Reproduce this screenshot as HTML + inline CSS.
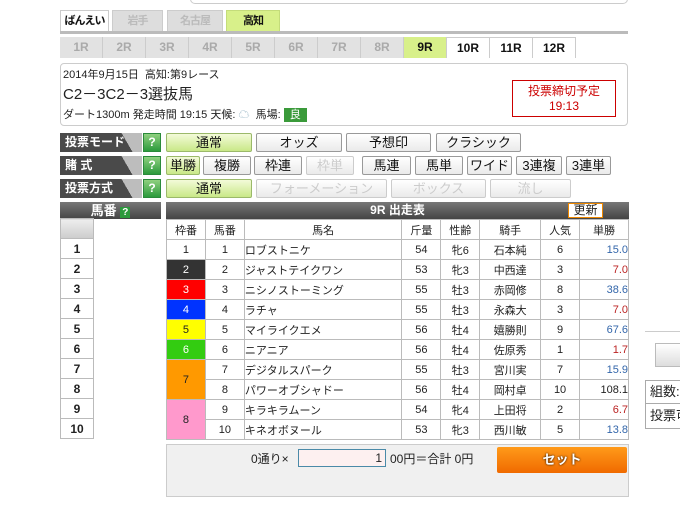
<!DOCTYPE html>
<html><head><meta charset="utf-8"><style>
*{margin:0;padding:0;box-sizing:border-box}
body{width:680px;height:510px;background:#fff;position:relative;overflow:hidden;font-family:"Liberation Sans","Noto Sans CJK JP",sans-serif;color:#222}
.a{position:absolute}
.tab{position:absolute;top:10px;height:21px;font-size:11px;text-align:center;line-height:20px;border:1px solid #ccc;border-bottom:none;font-weight:bold;color:#bbb;background:#ddd;white-space:nowrap;overflow:hidden;letter-spacing:-1px}
.rt{position:absolute;top:37px;width:43px;height:21px;font-size:12px;font-weight:bold;text-align:center;line-height:20px;border-right:1px solid #ccc;color:#aaa;background:#e2e2e2}
.lbl{position:absolute;left:60px;width:82px;height:19px;background:linear-gradient(60deg,#4a4a4a 0,#4a4a4a 78%,#bdbdbd 78%);color:#fff;font-size:12px;font-weight:bold;line-height:19px;padding-left:5px}
.q{position:absolute;left:143px;width:18px;height:19px;background:linear-gradient(#8fd07f,#2c9a3c);border:1px solid #2a8a3a;color:#fff;font-weight:bold;font-size:12px;text-align:center;line-height:17px}
.b{position:absolute;height:19px;border:1px solid #999;border-radius:2px;background:linear-gradient(#fff,#eaeaea);font-size:13px;text-align:center;line-height:17px;color:#111;white-space:nowrap;overflow:hidden}
.g{background:linear-gradient(#f3fbd9,#c9e888);border-color:#9bb96a}
.d{color:#ccc;border-color:#ccc}
table{border-collapse:collapse;font-size:11px}
td{border:1px solid #bbb;height:20px;text-align:center;padding:0}
</style></head><body>
<div class="a" style="left:190px;top:-6px;width:438px;height:10px;border:1px solid #ccc;border-radius:0 0 5px 5px"></div>
<div class="tab" style="left:60px;width:49px;background:#fff;color:#111">ばんえい</div>
<div class="tab" style="left:112px;width:51px">岩手</div>
<div class="tab" style="left:167px;width:56px">名古屋</div>
<div class="tab" style="left:226px;width:54px;background:#d8f08a;color:#111;border-color:#c4dc7a">高知</div>
<div class="a" style="left:60px;top:31px;width:568px;height:3px;background:#bbb"></div>
<div class="rt" style="left:60px">1R</div><div class="rt" style="left:103px">2R</div><div class="rt" style="left:146px">3R</div><div class="rt" style="left:189px">4R</div><div class="rt" style="left:232px">5R</div><div class="rt" style="left:275px">6R</div><div class="rt" style="left:318px">7R</div><div class="rt" style="left:361px">8R</div>
<div class="rt" style="left:404px;background:#d8f08a;color:#111">9R</div>
<div class="rt" style="left:447px;background:#fff;color:#111;border-top:1px solid #ccc">10R</div>
<div class="rt" style="left:490px;background:#fff;color:#111;border-top:1px solid #ccc">11R</div>
<div class="rt" style="left:533px;background:#fff;color:#111;border-top:1px solid #ccc">12R</div>
<div class="a" style="left:60px;top:63px;width:568px;height:63px;border:1px solid #ccc;border-radius:4px"></div>
<div class="a" style="left:63px;top:66px;font-size:11px">2014年9月15日&nbsp; 高知:第9レース</div>
<div class="a" style="left:63px;top:83px;font-size:15px">C2－3C2－3選抜馬</div>
<div class="a" style="left:63px;top:106px;font-size:11px">ダート1300m 発走時間 19:15 天候: <span style="color:#8ab">☁</span>&nbsp; 馬場: <span style="background:#3a9a3a;color:#fff;padding:1px 6px">良</span></div>
<div class="a" style="left:512px;top:80px;width:104px;height:37px;border:1px solid #c00;color:#c00;font-size:12px;text-align:center;line-height:15px;padding-top:3px">投票締切予定<br>19:13</div>

<div class="lbl" style="top:133px">投票モード</div><div class="q" style="top:133px">?</div>
<div class="lbl" style="top:156px">賭 式</div><div class="q" style="top:156px">?</div>
<div class="lbl" style="top:179px">投票方式</div><div class="q" style="top:179px">?</div>
<div class="b g" style="left:166px;top:133px;width:86px">通常</div>
<div class="b" style="left:256px;top:133px;width:86px">オッズ</div>
<div class="b" style="left:346px;top:133px;width:85px">予想印</div>
<div class="b" style="left:436px;top:133px;width:85px">クラシック</div>
<div class="b g" style="left:166px;top:156px;width:34px">単勝</div>
<div class="b" style="left:203px;top:156px;width:48px">複勝</div>
<div class="b" style="left:254px;top:156px;width:48px">枠連</div>
<div class="b d" style="left:306px;top:156px;width:48px">枠単</div>
<div class="b" style="left:362px;top:156px;width:49px">馬連</div>
<div class="b" style="left:415px;top:156px;width:48px">馬単</div>
<div class="b" style="left:467px;top:156px;width:45px">ワイド</div>
<div class="b" style="left:516px;top:156px;width:46px">3連複</div>
<div class="b" style="left:566px;top:156px;width:45px">3連単</div>
<div class="b g" style="left:166px;top:179px;width:86px">通常</div>
<div class="b d" style="left:256px;top:179px;width:131px">フォーメーション</div>
<div class="b d" style="left:391px;top:179px;width:95px">ボックス</div>
<div class="b d" style="left:490px;top:179px;width:81px">流し</div>

<div class="a" style="left:60px;top:202px;width:101px;height:17px;background:linear-gradient(#777,#444);color:#fff;font-size:13px;font-weight:bold;text-align:center;line-height:17px">馬番 <span style="background:#2c9a3c;font-size:10px;padding:0 2px">?</span></div>
<table class="a" style="left:60px;top:218px;width:34px;font-weight:bold;font-size:12px">
<tr><td style="background:linear-gradient(#eee,#ccc)"></td></tr>
<tr><td>1</td></tr><tr><td>2</td></tr><tr><td>3</td></tr><tr><td>4</td></tr><tr><td>5</td></tr><tr><td>6</td></tr><tr><td>7</td></tr><tr><td>8</td></tr><tr><td>9</td></tr><tr><td>10</td></tr>
</table>

<div class="a" style="left:166px;top:202px;width:463px;height:17px;background:linear-gradient(#777,#444);color:#fff;font-size:12px;font-weight:bold;text-align:center;line-height:17px">9R 出走表</div>
<div class="a" style="left:568px;top:203px;width:35px;height:15px;background:#fff;border:1px solid #e80;font-size:12px;line-height:13px;text-align:center">更新</div>
<table class="a" style="left:166px;top:219px;width:463px">
<colgroup><col style="width:39px"><col style="width:39px"><col style="width:158px"><col style="width:39px"><col style="width:39px"><col style="width:61px"><col style="width:39px"><col style="width:49px"></colgroup>
<tr style="height:19px"><td>枠番</td><td>馬番</td><td>馬名</td><td>斤量</td><td>性齢</td><td>騎手</td><td>人気</td><td>単勝</td></tr>
<tr><td>1</td><td>1</td><td style="text-align:left">ロブストニケ</td><td>54</td><td>牝6</td><td>石本純</td><td>6</td><td style="text-align:right;color:#36a">15.0</td></tr>
<tr><td style="background:#333;color:#fff">2</td><td>2</td><td style="text-align:left">ジャストテイクワン</td><td>53</td><td>牝3</td><td>中西達</td><td>3</td><td style="text-align:right;color:#b22">7.0</td></tr>
<tr><td style="background:#f00;color:#fff">3</td><td>3</td><td style="text-align:left">ニシノストーミング</td><td>55</td><td>牡3</td><td>赤岡修</td><td>8</td><td style="text-align:right;color:#36a">38.6</td></tr>
<tr><td style="background:#03f;color:#fff">4</td><td>4</td><td style="text-align:left">ラチャ</td><td>55</td><td>牡3</td><td>永森大</td><td>3</td><td style="text-align:right;color:#b22">7.0</td></tr>
<tr><td style="background:#ff0">5</td><td>5</td><td style="text-align:left">マイライクエメ</td><td>56</td><td>牡4</td><td>嬉勝則</td><td>9</td><td style="text-align:right;color:#36a">67.6</td></tr>
<tr><td style="background:#3c1;color:#fff">6</td><td>6</td><td style="text-align:left">ニアニア</td><td>56</td><td>牡4</td><td>佐原秀</td><td>1</td><td style="text-align:right;color:#b22">1.7</td></tr>
<tr><td rowspan="2" style="background:#f90">7</td><td>7</td><td style="text-align:left">デジタルスパーク</td><td>55</td><td>牡3</td><td>宮川実</td><td>7</td><td style="text-align:right;color:#36a">15.9</td></tr>
<tr><td>8</td><td style="text-align:left">パワーオブシャドー</td><td>56</td><td>牡4</td><td>岡村卓</td><td>10</td><td style="text-align:right">108.1</td></tr>
<tr><td rowspan="2" style="background:#f9c">8</td><td>9</td><td style="text-align:left">キラキラムーン</td><td>54</td><td>牝4</td><td>上田将</td><td>2</td><td style="text-align:right;color:#b22">6.7</td></tr>
<tr><td>10</td><td style="text-align:left">キネオボヌール</td><td>53</td><td>牝3</td><td>西川敏</td><td>5</td><td style="text-align:right;color:#36a">13.8</td></tr>
</table>

<div class="a" style="left:166px;top:444px;width:463px;height:53px;background:#f0f0f0;border:1px solid #ccc"></div>
<div class="a" style="left:251px;top:450px;font-size:12px">0通り×</div>
<div class="a" style="left:298px;top:449px;width:88px;height:18px;background:#fdf0f0;border:1px solid #4a8aa8;font-size:12px;text-align:right;padding-right:3px;line-height:16px">1</div>
<div class="a" style="left:390px;top:450px;font-size:12px">00円＝合計 0円</div>
<div class="a" style="left:497px;top:447px;width:130px;height:26px;background:linear-gradient(#ff9a1a,#f06a00);border-radius:2px;color:#fff;font-weight:bold;font-size:13px;text-align:center;line-height:26px;text-shadow:0 0 2px #000">セット</div>

<div class="a" style="left:645px;top:331px;width:40px;height:1px;background:#ccc"></div>
<div class="a" style="left:655px;top:343px;width:30px;height:24px;background:linear-gradient(#fff,#ddd);border:1px solid #bbb"></div>
<div class="a" style="left:645px;top:380px;width:40px;height:24px;border:1px solid #aaa;font-size:13px;padding-left:4px;line-height:22px">組数:</div>
<div class="a" style="left:645px;top:403px;width:40px;height:26px;border:1px solid #aaa;font-size:13px;padding-left:4px;line-height:24px;white-space:nowrap;overflow:hidden">投票可</div>
</body></html>
